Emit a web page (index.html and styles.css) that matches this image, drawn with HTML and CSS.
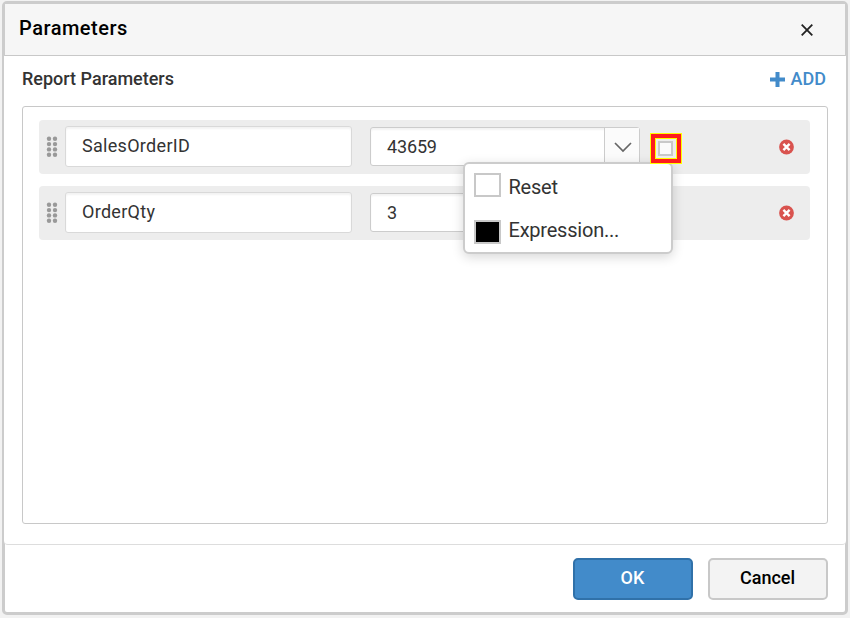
FILE: index.html
```html
<!DOCTYPE html>
<html lang="en">
<head>
<meta charset="utf-8">
<title>Parameters</title>
<link rel="stylesheet" href="styles.css">
</head>
<body>
<svg class="sprites" width="0" height="0">
  <symbol id="grip" viewBox="0 0 12 22">
    <g fill="#999">
      <circle cx="3" cy="2.8" r="2.2"/><circle cx="9" cy="2.8" r="2.2"/>
      <circle cx="3" cy="8.1" r="2.2"/><circle cx="9" cy="8.1" r="2.2"/>
      <circle cx="3" cy="13.4" r="2.2"/><circle cx="9" cy="13.4" r="2.2"/>
      <circle cx="3" cy="18.7" r="2.2"/><circle cx="9" cy="18.7" r="2.2"/>
    </g>
  </symbol>
  <symbol id="remove" viewBox="0 0 16 16">
    <circle cx="8.5" cy="8" r="7.4" fill="#d9534f"/>
    <path d="M5.4 4.9l6.2 6.2M11.6 4.9l-6.2 6.2" stroke="#fff" stroke-width="2.4"/>
  </symbol>
</svg>
<div class="dialog">
  <header class="header">
    <h1 class="title">Parameters</h1>
    <svg class="close" width="12" height="12" viewBox="0 0 12 12"><path d="M.7 .7l10.6 10.6M11.3 .7L.7 11.3" stroke="#222" stroke-width="1.8"/></svg>
  </header>
  <main class="body">
    <div class="toolbar">
      <h2 class="subtitle">Report Parameters</h2>
      <div class="add"><svg width="15" height="15" viewBox="0 0 15 15"><path d="M7.5 0v15M0 7.5h15" stroke="#428bca" stroke-width="4"/></svg><span>ADD</span></div>
    </div>
    <div class="list">
      <div class="row">
        <svg class="grip" width="12" height="22"><use href="#grip"/></svg>
        <div class="name">SalesOrderID</div>
        <div class="combo">
          <div class="value">43659</div>
          <div class="drop"><svg width="18" height="11" viewBox="0 0 18 11"><path d="M1 1l8 8 8-8" fill="none" stroke="#666" stroke-width="1.7"/></svg></div>
        </div>
        <div class="marker"><div class="marker-inner"><div class="square"></div></div></div>
        <svg class="remove" width="16" height="16"><use href="#remove"/></svg>
        <div class="menu">
          <div class="item"><span class="swatch"></span><span>Reset</span></div>
          <div class="item"><span class="swatch filled"></span><span>Expression...</span></div>
        </div>
      </div>
      <div class="row">
        <svg class="grip" width="12" height="22"><use href="#grip"/></svg>
        <div class="name">OrderQty</div>
        <div class="combo">
          <div class="value">3</div>
          <div class="drop"></div>
        </div>
        <svg class="remove" width="16" height="16"><use href="#remove"/></svg>
      </div>
    </div>
  </main>
  <footer class="footer">
    <button class="btn primary">OK</button>
    <button class="btn">Cancel</button>
  </footer>
</div>
</body>
</html>
```
FILE: styles.css
```css
* { box-sizing: border-box; }
body {
  margin: 0;
  height: 618px;
  padding: 1px 2px 3px;
  overflow: hidden;
  background: #f2f2f2;
  font-family: Roboto, "Liberation Sans", sans-serif;
  color: #333;
}
.sprites { position: absolute; }
.dialog {
  width: 846px;
  height: 614px;
  border: 3px solid #ccc;
  border-radius: 5px;
  background: #fff;
  display: flex;
  flex-direction: column;
}
.header {
  height: 52px;
  flex: none;
  background: #f6f6f6;
  border-bottom: 1px solid #c8c8c8;
  display: flex;
  align-items: center;
  justify-content: space-between;
  padding: 0 32px 3px 14px;
}
.title { margin: 0; font-size: 20px; font-weight: 500; letter-spacing: .5px; color: #000; }
.close { margin-top: 3px; }
.body {
  flex: 1;
  margin: 0 -1px;
  background: #fff;
  border-radius: 0 0 4px 4px;
  border-bottom: 1px solid #ddd;
  padding: 0 18px;
}
.toolbar {
  height: 50px;
  display: flex;
  align-items: center;
  justify-content: space-between;
  padding: 0 2px 6px 0;
}
.subtitle { margin: 0; font-size: 18px; font-weight: 500; }
.add {
  display: flex;
  align-items: center;
  gap: 6px;
  font-size: 18px;
  font-weight: 500;
  color: #428bca;
}
.add svg { margin-top: 2px; }
.list {
  height: 418px;
  border: 1px solid #c8c8c8;
  border-radius: 3px;
  padding: 13px 17px 0 16px;
  display: flex;
  flex-direction: column;
  gap: 12px;
}
.row {
  position: relative;
  height: 54px;
  background: #ededed;
  border-radius: 4px;
  display: flex;
  align-items: center;
  padding: 0 16px 0 7px;
}
.row:first-child { z-index: 1; }
.grip { margin: 0 7px 0 0; }
.name {
  width: 287px;
  height: 41px;
  margin: -1px 18px 0 0;
  border: 1px solid #d9d9d9;
  border-radius: 3px;
  background: #fff;
  box-shadow: inset 0 2px 2px #f3f3f3;
  padding-left: 16px;
  font-size: 18px;
  line-height: 38px;
  letter-spacing: .3px;
}
.combo {
  width: 270px;
  height: 39px;
  border: 1px solid #ccc;
  border-radius: 3px;
  background: #fff;
  box-shadow: inset 0 2px 2px #f3f3f3;
  display: flex;
  margin-top: -1px;
}
.value {
  flex: 1;
  padding-left: 16px;
  font-size: 18px;
  line-height: 38px;
  letter-spacing: -.15px;
}
.drop {
  width: 35px;
  border-left: 1px solid #ccc;
  background: #fbfbfb;
  display: flex;
  align-items: center;
  justify-content: center;
  padding: 2px 0 0 2px;
}
.marker {
  z-index: 2;
  width: 32px;
  height: 31px;
  margin: 3px 0 0 10px;
  border: 1px solid #ff0;
  background: #fe1c1c;
  padding: 4px;
}
.marker-inner {
  width: 22px;
  height: 21px;
  border: 1px solid #ff0;
  background: #ededed;
  padding: 2px;
}
.square {
  width: 15px;
  height: 15px;
  border: 2px solid #c8c8c8;
  background: #fafafa;
}
.remove { margin-left: auto; }
.menu {
  position: absolute;
  z-index: 1;
  left: 424px;
  top: 42px;
  width: 210px;
  height: 92px;
  border: 2px solid #ccc;
  border-radius: 6px;
  background: #fff;
  box-shadow: 0 3px 12px rgba(0, 0, 0, .16);
  padding: 1px 9px;
}
.item {
  height: 43px;
  display: flex;
  align-items: center;
  gap: 7.5px;
  font-size: 20px;
  letter-spacing: -.22px;
}
.swatch {
  width: 27px;
  height: 24px;
  margin-top: -3px;
  border: 2px solid #c8c8c8;
}
.filled { background: #000; margin-top: 4px; }
.footer {
  height: 67px;
  flex: none;
  display: flex;
  justify-content: flex-end;
  gap: 15px;
  padding: 13px 17px 0 0;
}
.btn {
  width: 120px;
  height: 42px;
  border: 2px solid #c8c8c8;
  border-radius: 5px;
  background: #f3f3f3;
  color: #000;
  font: 500 18px Roboto, "Liberation Sans", sans-serif;
  padding: 0 1px 4px 0;
}
.primary { background: #428bca; border-color: #3071a9; color: #fff; }
```
